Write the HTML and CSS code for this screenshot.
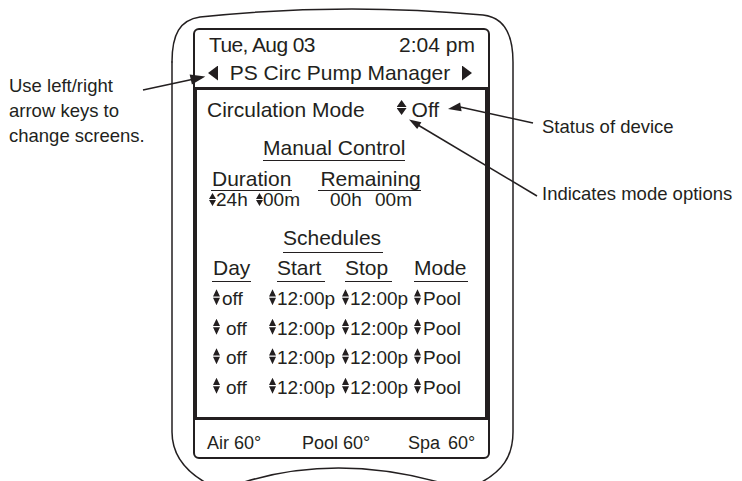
FILE: index.html
```html
<!DOCTYPE html>
<html lang="en">
<head>
<meta charset="utf-8">
<title>PS Circ Pump Manager</title>
<link rel="stylesheet" href="styles.css">
</head>
<body>
<div class="stage">
  <div class="note-left">Use left/right<br>arrow keys to<br>change screens.</div>

  <div class="device">
    <div class="screen">
      <div class="line date-line"><span class="date">Tue, Aug 03</span><span>2:04 pm</span></div>
      <div class="line title-line"><span class="tri tri-l"></span><span>PS Circ Pump Manager</span><span class="tri tri-r"></span></div>

      <div class="panel">
        <div class="mode-row"><span>Circulation Mode</span><span class="ud ud-lg"></span><span class="mode-val">Off</span></div>

        <div class="mc"><span class="ul">Manual Control</span></div>

        <div class="dur-head"><span class="ul dur">Duration</span><span class="ul rem">Remaining</span></div>
        <div class="dur-vals">
          <span class="v v1"><span class="ud ud-sm"></span><span>24h</span></span>
          <span class="v v2"><span class="ud ud-sm"></span><span>00m</span></span>
          <span class="v v3"><span>00h</span></span>
          <span class="v v4"><span>00m</span></span>
        </div>

        <div class="sched-title"><span class="ul">Schedules</span></div>

        <div class="sched">
          <div class="hc"><span class="ul h-day">Day</span></div>
          <div class="hc"><span class="ul h-start">Start</span></div>
          <div class="hc"><span class="ul h-stop">Stop</span></div>
          <div class="hc"><span class="ul h-mode">Mode</span></div>

          <div class="dc c1"><span class="ud"></span><span class="t t-off1">off</span></div>
          <div class="dc c2"><span class="ud"></span><span class="t">12:00p</span></div>
          <div class="dc c3"><span class="ud"></span><span class="t">12:00p</span></div>
          <div class="dc c4"><span class="ud"></span><span class="t t-pool">Pool</span></div>

          <div class="dc c1"><span class="ud"></span><span class="t t-off">off</span></div>
          <div class="dc c2"><span class="ud"></span><span class="t">12:00p</span></div>
          <div class="dc c3"><span class="ud"></span><span class="t">12:00p</span></div>
          <div class="dc c4"><span class="ud"></span><span class="t t-pool">Pool</span></div>

          <div class="dc c1"><span class="ud"></span><span class="t t-off">off</span></div>
          <div class="dc c2"><span class="ud"></span><span class="t">12:00p</span></div>
          <div class="dc c3"><span class="ud"></span><span class="t">12:00p</span></div>
          <div class="dc c4"><span class="ud"></span><span class="t t-pool">Pool</span></div>

          <div class="dc c1"><span class="ud"></span><span class="t t-off">off</span></div>
          <div class="dc c2"><span class="ud"></span><span class="t">12:00p</span></div>
          <div class="dc c3"><span class="ud"></span><span class="t">12:00p</span></div>
          <div class="dc c4"><span class="ud"></span><span class="t t-pool">Pool</span></div>
        </div>
      </div>

      <div class="foot">
        <span class="f-air">Air 60°</span>
        <span class="f-pool">Pool 60°</span>
        <span class="f-spa">Spa<span class="f-spa-val">60°</span></span>
      </div>
    </div>
  </div>

  <div class="notes-right">
    <div class="note">Status of device</div>
    <div class="note note-2">Indicates mode options</div>
  </div>

  <svg class="callouts" width="742" height="481" viewBox="0 0 742 481" aria-hidden="true">
    <g fill="none" stroke="#231f20" stroke-width="1.5" stroke-linecap="round">
      <path d="M172,62 C172,34 180,20 200,17 Q342,2 483,15 C502,17 513,31 513,62 L513,432 C513,456 503,472 476,485"/>
      <path d="M172,62 L172,432 C172,455 185,472 210,485"/>
      <path d="M232,486 Q335,450 452,486"/>
    </g>
    <g stroke="#231f20" stroke-width="1.5" fill="#231f20">
      <line x1="143" y1="90" x2="193" y2="79.2"/>
      <polygon points="203,77 192.4,83.3 190.6,75.4"/>
      <line x1="533" y1="123" x2="460" y2="107"/>
      <polygon points="448,109 460.1,102.4 461.6,111.3" stroke="none"/>
      <line x1="537" y1="196" x2="418" y2="125"/>
      <polygon points="409,119.5 421.4,122.3 417.2,129.1" stroke="none"/>
    </g>
  </svg>
</div>
</body>
</html>
```

FILE: styles.css
```css
* { box-sizing: border-box; }

html, body {
  margin: 0;
  padding: 0;
  background: #ffffff;
}

body {
  font-family: "Liberation Sans", Arial, Helvetica, sans-serif;
  color: #231f20;
}

.stage {
  position: relative;
  display: flex;
  width: 742px;
  height: 481px;
  overflow: hidden;
}

/* ---------- annotations ---------- */
.note-left {
  flex: none;
  width: 172px;
  padding: 73px 0 0 9px;
  font-size: 18.5px;
  line-height: 25px;
}

.notes-right {
  flex: none;
  padding: 114px 0 0 29px;
  font-size: 18.5px;
  line-height: 25px;
}

.note-2 {
  margin-top: 42px;
}

.callouts {
  position: absolute;
  left: 0;
  top: 0;
  pointer-events: none;
}

/* ---------- device ---------- */
.device {
  flex: none;
  width: 341px;
  padding: 28px 0 0 21px;
}

.screen {
  width: 297px;
  height: 431px;
  border: 2px solid #231f20;
  border-radius: 6px;
  padding-top: 1px;
}

.line {
  display: flex;
  justify-content: space-between;
  align-items: center;
  height: 28px;
  line-height: 28px;
  font-size: 21px;
}

.date-line {
  padding: 0 13px 0 14px;
}

.date {
  letter-spacing: -0.6px;
}

.title-line {
  padding: 0 16px 0 13px;
}

.tri {
  width: 10px;
  height: 15px;
  background: #231f20;
}

.tri-l { clip-path: polygon(0 50%, 100% 0, 100% 100%); }
.tri-r { clip-path: polygon(0 0, 100% 50%, 0 100%); }

/* up/down selector glyph */
.ud {
  display: inline-block;
  flex: none;
  width: 7px;
  height: 16px;
  background: #231f20;
  clip-path: polygon(50% 0, 100% 46%, 50% 46%, 50% 54%, 100% 54%, 50% 100%, 0 54%, 50% 54%, 50% 46%, 0 46%);
}

.ud-lg {
  width: 10px;
  height: 15px;
}

.ud-sm {
  width: 7px;
  height: 13px;
}

/* ---------- main panel ---------- */
.panel {
  margin: 0 -2px;
  height: 333px;
  border: 3px solid #231f20;
  border-left-width: 4px;
  border-right-width: 5px;
  padding: 6px 0 0 10px;
  font-size: 21px;
}

.ul {
  display: block;
  border-bottom: 1.5px solid #231f20;
}

.mode-row {
  display: flex;
  align-items: flex-start;
  height: 28px;
  line-height: 28px;
}

.mode-row .ud-lg {
  margin: 4px 0 0 32px;
}

.mode-val {
  margin-left: 5px;
}

.mc {
  display: flex;
  margin-top: 12px;
  padding-left: 56px;
  line-height: 24px;
}

.dur-head {
  display: flex;
  margin-top: 7px;
  line-height: 22px;
}

.dur {
  margin-left: 4px;
  padding: 0 1px;
}

.rem {
  margin-left: 26px;
  padding-left: 2px;
}

.dur-vals {
  display: flex;
  align-items: baseline;
  height: 18px;
  line-height: 18px;
  font-size: 19px;
}

.v {
  display: flex;
  align-items: baseline;
  flex: none;
}

.v1 { width: 47px; margin-left: 2px; }
.v2 { width: 74px; }
.v3 { width: 45px; }

.sched-title {
  display: flex;
  margin-top: 14.7px;
  padding-left: 76px;
  line-height: 28px;
}

.sched-title .ul {
  padding-right: 2px;
}

.sched {
  display: grid;
  grid-template-columns: 57px 73px 71px 1fr;
  grid-template-rows: 25.5px 32px 29.5px 29.5px 29.5px;
  margin: 3.5px 0 0 5px;
}

.hc {
  display: flex;
  line-height: 24px;
}

.h-day { padding: 0 1px; }
.h-start { margin-left: 8px; padding-right: 4px; }
.h-stop { margin-left: 3px; padding-right: 4px; }
.h-mode { margin-left: 1px; padding-right: 1px; }

.dc {
  display: flex;
  align-items: baseline;
  align-self: end;
  height: 29.5px;
  line-height: 29.5px;
  font-size: 19px;
}

.c1 .ud { margin-left: 1px; }
.c4 .ud { margin-left: 1px; }

.dc .t { margin-left: 1px; }
.dc .t-off1 { margin-left: 2px; }
.dc .t-off { margin-left: 6px; }
.dc .t-pool { margin-left: 2px; }

/* ---------- footer ---------- */
.foot {
  display: flex;
  padding: 11px 0 0 12px;
  font-size: 18px;
  line-height: 24px;
}

.f-air { width: 95px; flex: none; }
.f-pool { width: 106px; flex: none; }

.f-spa-val {
  margin-left: 8px;
}
```
